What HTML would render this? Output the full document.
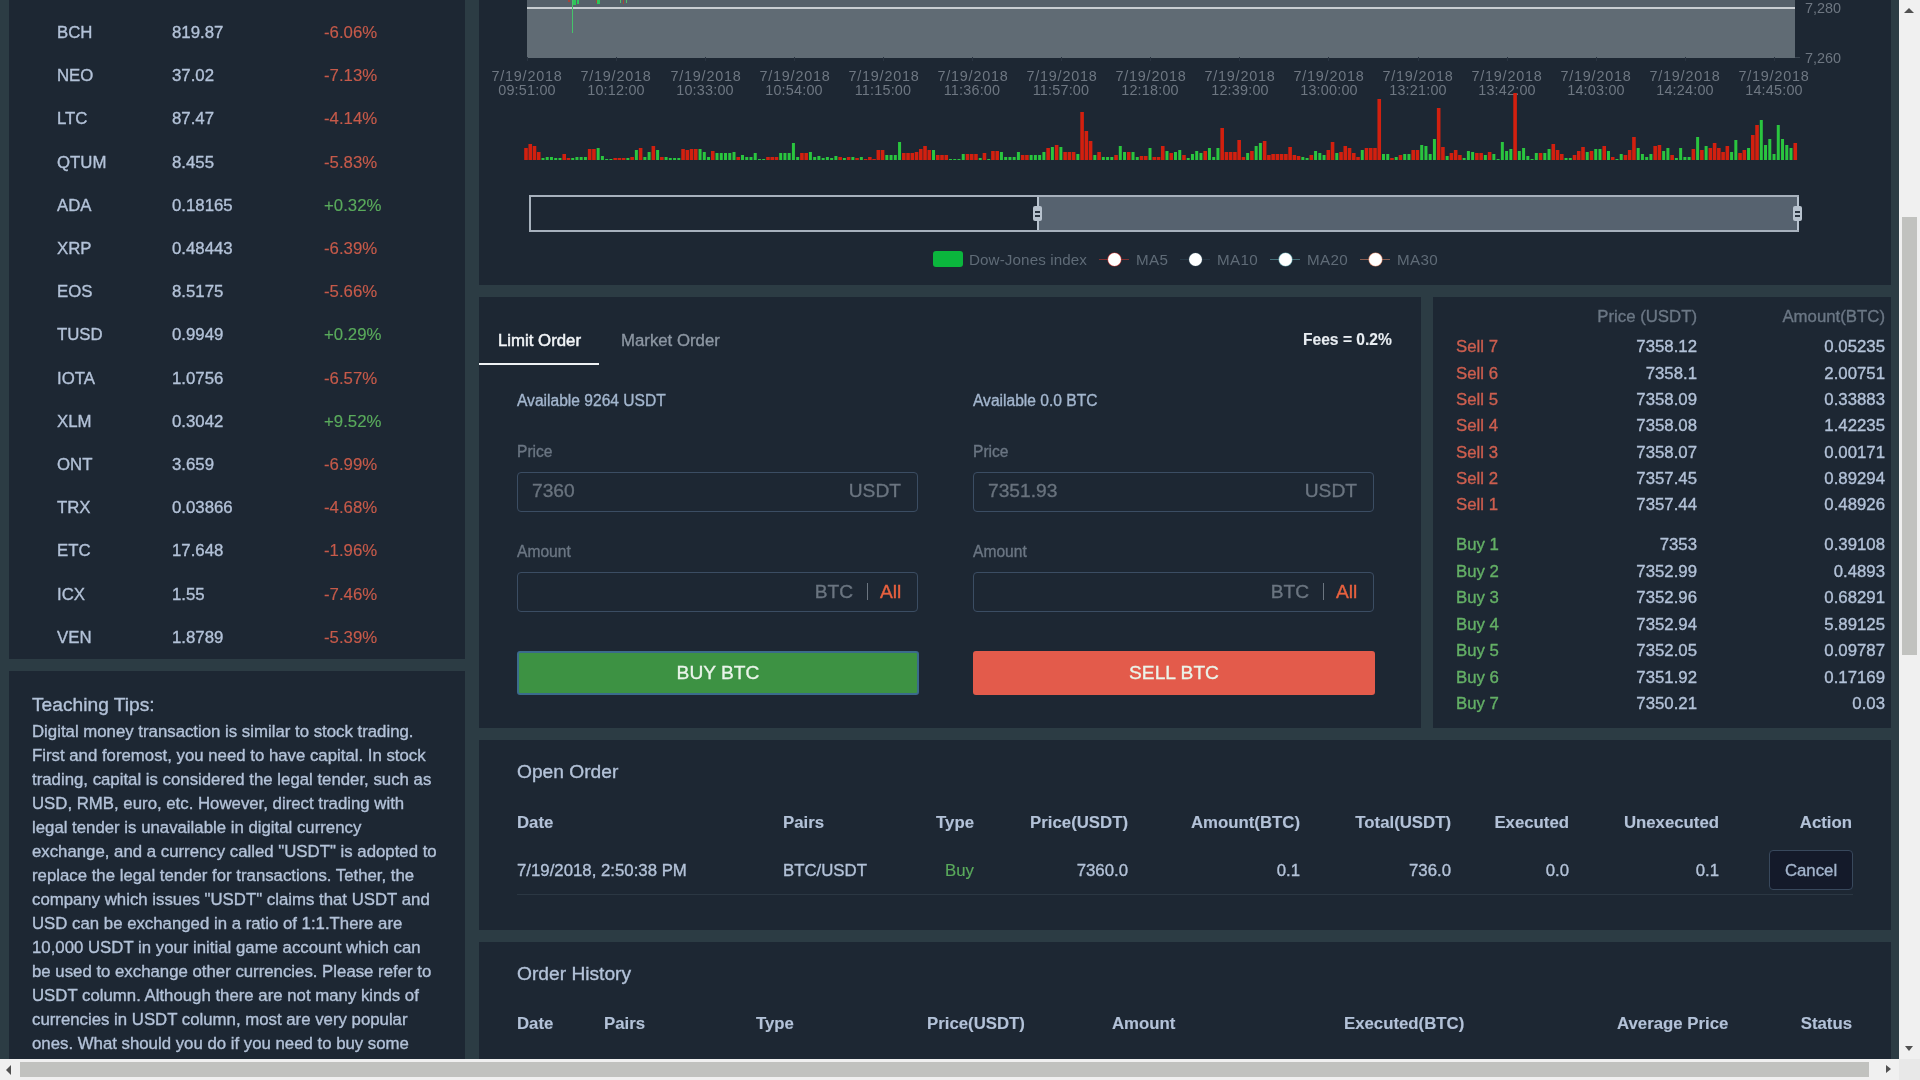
<!DOCTYPE html>
<html><head><meta charset="utf-8"><title>Trade</title>
<style>
html,body{margin:0;padding:0;width:1920px;height:1080px;overflow:hidden;background:#f0f0f0;}
#page{position:absolute;left:0;top:0;transform:translateZ(0);width:1899px;height:1059px;background:#2c3c44;overflow:hidden;font-family:"Liberation Sans",sans-serif;}
.t{position:absolute;line-height:1;white-space:nowrap;-webkit-text-stroke-width:0.35px;will-change:transform;}
.b{-webkit-text-stroke-width:0.12px;}
.r{position:absolute;}
#vs{position:absolute;left:1899px;top:0;width:21px;height:1059px;background:#f0f0f0;}
#hs{position:absolute;left:0;top:1059px;width:1899px;height:21px;background:#f0f0f0;}
#corner{position:absolute;left:1899px;top:1059px;width:21px;height:21px;background:#e8e8e8;}
</style></head><body>
<div id="page"><div class="r" style="left:9px;top:0px;width:456px;height:659px;background:#1d2733;"></div><div class="r" style="left:9px;top:671px;width:456px;height:500px;background:#1d2733;"></div><div class="r" style="left:479px;top:0px;width:1412px;height:285px;background:#1d2733;"></div><div class="r" style="left:479px;top:297px;width:942px;height:431px;background:#1d2733;"></div><div class="r" style="left:1433px;top:297px;width:458px;height:431px;background:#1d2733;"></div><div class="r" style="left:479px;top:740px;width:1412px;height:190px;background:#1d2733;"></div><div class="r" style="left:479px;top:942px;width:1412px;height:300px;background:#1d2733;"></div><div class="t" style="left:56.5px;top:25.09px;font-size:16.8px;color:#b3c2d8;">BCH</div><div class="t" style="left:171.5px;top:25.09px;font-size:16.8px;color:#b3c2d8;">819.87</div><div class="t" style="left:324px;top:25.09px;font-size:16.8px;color:#c65a4a;-webkit-text-stroke-width:0.15px;">-6.06%</div><div class="t" style="left:56.5px;top:68.29px;font-size:16.8px;color:#b3c2d8;">NEO</div><div class="t" style="left:171.5px;top:68.29px;font-size:16.8px;color:#b3c2d8;">37.02</div><div class="t" style="left:324px;top:68.29px;font-size:16.8px;color:#c65a4a;-webkit-text-stroke-width:0.15px;">-7.13%</div><div class="t" style="left:56.5px;top:111.49px;font-size:16.8px;color:#b3c2d8;">LTC</div><div class="t" style="left:171.5px;top:111.49px;font-size:16.8px;color:#b3c2d8;">87.47</div><div class="t" style="left:324px;top:111.49px;font-size:16.8px;color:#c65a4a;-webkit-text-stroke-width:0.15px;">-4.14%</div><div class="t" style="left:56.5px;top:154.69px;font-size:16.8px;color:#b3c2d8;">QTUM</div><div class="t" style="left:171.5px;top:154.69px;font-size:16.8px;color:#b3c2d8;">8.455</div><div class="t" style="left:324px;top:154.69px;font-size:16.8px;color:#c65a4a;-webkit-text-stroke-width:0.15px;">-5.83%</div><div class="t" style="left:56.5px;top:197.89px;font-size:16.8px;color:#b3c2d8;">ADA</div><div class="t" style="left:171.5px;top:197.89px;font-size:16.8px;color:#b3c2d8;">0.18165</div><div class="t" style="left:324px;top:197.89px;font-size:16.8px;color:#5aab5c;-webkit-text-stroke-width:0.15px;">+0.32%</div><div class="t" style="left:56.5px;top:241.09px;font-size:16.8px;color:#b3c2d8;">XRP</div><div class="t" style="left:171.5px;top:241.09px;font-size:16.8px;color:#b3c2d8;">0.48443</div><div class="t" style="left:324px;top:241.09px;font-size:16.8px;color:#c65a4a;-webkit-text-stroke-width:0.15px;">-6.39%</div><div class="t" style="left:56.5px;top:284.29px;font-size:16.8px;color:#b3c2d8;">EOS</div><div class="t" style="left:171.5px;top:284.29px;font-size:16.8px;color:#b3c2d8;">8.5175</div><div class="t" style="left:324px;top:284.29px;font-size:16.8px;color:#c65a4a;-webkit-text-stroke-width:0.15px;">-5.66%</div><div class="t" style="left:56.5px;top:327.49px;font-size:16.8px;color:#b3c2d8;">TUSD</div><div class="t" style="left:171.5px;top:327.49px;font-size:16.8px;color:#b3c2d8;">0.9949</div><div class="t" style="left:324px;top:327.49px;font-size:16.8px;color:#5aab5c;-webkit-text-stroke-width:0.15px;">+0.29%</div><div class="t" style="left:56.5px;top:370.69px;font-size:16.8px;color:#b3c2d8;">IOTA</div><div class="t" style="left:171.5px;top:370.69px;font-size:16.8px;color:#b3c2d8;">1.0756</div><div class="t" style="left:324px;top:370.69px;font-size:16.8px;color:#c65a4a;-webkit-text-stroke-width:0.15px;">-6.57%</div><div class="t" style="left:56.5px;top:413.89px;font-size:16.8px;color:#b3c2d8;">XLM</div><div class="t" style="left:171.5px;top:413.89px;font-size:16.8px;color:#b3c2d8;">0.3042</div><div class="t" style="left:324px;top:413.89px;font-size:16.8px;color:#5aab5c;-webkit-text-stroke-width:0.15px;">+9.52%</div><div class="t" style="left:56.5px;top:457.09px;font-size:16.8px;color:#b3c2d8;">ONT</div><div class="t" style="left:171.5px;top:457.09px;font-size:16.8px;color:#b3c2d8;">3.659</div><div class="t" style="left:324px;top:457.09px;font-size:16.8px;color:#c65a4a;-webkit-text-stroke-width:0.15px;">-6.99%</div><div class="t" style="left:56.5px;top:500.29px;font-size:16.8px;color:#b3c2d8;">TRX</div><div class="t" style="left:171.5px;top:500.29px;font-size:16.8px;color:#b3c2d8;">0.03866</div><div class="t" style="left:324px;top:500.29px;font-size:16.8px;color:#c65a4a;-webkit-text-stroke-width:0.15px;">-4.68%</div><div class="t" style="left:56.5px;top:543.49px;font-size:16.8px;color:#b3c2d8;">ETC</div><div class="t" style="left:171.5px;top:543.49px;font-size:16.8px;color:#b3c2d8;">17.648</div><div class="t" style="left:324px;top:543.49px;font-size:16.8px;color:#c65a4a;-webkit-text-stroke-width:0.15px;">-1.96%</div><div class="t" style="left:56.5px;top:586.69px;font-size:16.8px;color:#b3c2d8;">ICX</div><div class="t" style="left:171.5px;top:586.69px;font-size:16.8px;color:#b3c2d8;">1.55</div><div class="t" style="left:324px;top:586.69px;font-size:16.8px;color:#c65a4a;-webkit-text-stroke-width:0.15px;">-7.46%</div><div class="t" style="left:56.5px;top:629.89px;font-size:16.8px;color:#b3c2d8;">VEN</div><div class="t" style="left:171.5px;top:629.89px;font-size:16.8px;color:#b3c2d8;">1.8789</div><div class="t" style="left:324px;top:629.89px;font-size:16.8px;color:#c65a4a;-webkit-text-stroke-width:0.15px;">-5.39%</div><div class="t" style="left:32px;top:694.82px;font-size:19.2px;color:#b3c2d8;">Teaching Tips:</div><div class="t" style="left:32px;top:723.69px;font-size:16.8px;color:#b3c2d8;">Digital money transaction is similar to stock trading.</div><div class="t" style="left:32px;top:747.69px;font-size:16.8px;color:#b3c2d8;">First and foremost, you need to have capital. In stock</div><div class="t" style="left:32px;top:771.69px;font-size:16.8px;color:#b3c2d8;">trading, capital is considered the legal tender, such as</div><div class="t" style="left:32px;top:795.69px;font-size:16.8px;color:#b3c2d8;">USD, RMB, euro, etc. However, direct trading with</div><div class="t" style="left:32px;top:819.69px;font-size:16.8px;color:#b3c2d8;">legal tender is unavailable in digital currency</div><div class="t" style="left:32px;top:843.69px;font-size:16.8px;color:#b3c2d8;">exchange, and a currency called &quot;USDT&quot; is adopted to</div><div class="t" style="left:32px;top:867.69px;font-size:16.8px;color:#b3c2d8;">replace the legal tender for transactions. Tether, the</div><div class="t" style="left:32px;top:891.69px;font-size:16.8px;color:#b3c2d8;">company which issues &quot;USDT&quot; claims that USDT and</div><div class="t" style="left:32px;top:915.69px;font-size:16.8px;color:#b3c2d8;">USD can be exchanged in a ratio of 1:1.There are</div><div class="t" style="left:32px;top:939.69px;font-size:16.8px;color:#b3c2d8;">10,000 USDT in your initial game account which can</div><div class="t" style="left:32px;top:963.69px;font-size:16.8px;color:#b3c2d8;">be used to exchange other currencies. Please refer to</div><div class="t" style="left:32px;top:987.69px;font-size:16.8px;color:#b3c2d8;">USDT column. Although there are not many kinds of</div><div class="t" style="left:32px;top:1011.69px;font-size:16.8px;color:#b3c2d8;">currencies in USDT column, most are very popular</div><div class="t" style="left:32px;top:1035.69px;font-size:16.8px;color:#b3c2d8;">ones. What should you do if you need to buy some</div><div class="r" style="left:527px;top:0px;width:1268px;height:58px;background:#606b74;"></div><div class="r" style="left:527px;top:0px;width:1268px;height:7px;background:#56616b;"></div><div class="r" style="left:527px;top:7px;width:1268px;height:2px;background:#c9ced3;"></div><div class="r" style="left:527px;top:57px;width:1px;height:4px;background:#2a3441;"></div><div class="t" style="left:527.4px;top:68.86px;font-size:14.4px;color:#6e7782;transform:translateX(-50%);letter-spacing:0.8px;-webkit-text-stroke-width:0;">7/19/2018</div><div class="t" style="left:527.1px;top:83.26px;font-size:14.4px;color:#6e7782;transform:translateX(-50%);letter-spacing:0.2px;-webkit-text-stroke-width:0;">09:51:00</div><div class="r" style="left:616px;top:57px;width:1px;height:4px;background:#2a3441;"></div><div class="t" style="left:616.4499999999999px;top:68.86px;font-size:14.4px;color:#6e7782;transform:translateX(-50%);letter-spacing:0.8px;-webkit-text-stroke-width:0;">7/19/2018</div><div class="t" style="left:616.15px;top:83.26px;font-size:14.4px;color:#6e7782;transform:translateX(-50%);letter-spacing:0.2px;-webkit-text-stroke-width:0;">10:12:00</div><div class="r" style="left:705px;top:57px;width:1px;height:4px;background:#2a3441;"></div><div class="t" style="left:705.5px;top:68.86px;font-size:14.4px;color:#6e7782;transform:translateX(-50%);letter-spacing:0.8px;-webkit-text-stroke-width:0;">7/19/2018</div><div class="t" style="left:705.2px;top:83.26px;font-size:14.4px;color:#6e7782;transform:translateX(-50%);letter-spacing:0.2px;-webkit-text-stroke-width:0;">10:33:00</div><div class="r" style="left:794px;top:57px;width:1px;height:4px;background:#2a3441;"></div><div class="t" style="left:794.55px;top:68.86px;font-size:14.4px;color:#6e7782;transform:translateX(-50%);letter-spacing:0.8px;-webkit-text-stroke-width:0;">7/19/2018</div><div class="t" style="left:794.25px;top:83.26px;font-size:14.4px;color:#6e7782;transform:translateX(-50%);letter-spacing:0.2px;-webkit-text-stroke-width:0;">10:54:00</div><div class="r" style="left:883px;top:57px;width:1px;height:4px;background:#2a3441;"></div><div class="t" style="left:883.6px;top:68.86px;font-size:14.4px;color:#6e7782;transform:translateX(-50%);letter-spacing:0.8px;-webkit-text-stroke-width:0;">7/19/2018</div><div class="t" style="left:883.3000000000001px;top:83.26px;font-size:14.4px;color:#6e7782;transform:translateX(-50%);letter-spacing:0.2px;-webkit-text-stroke-width:0;">11:15:00</div><div class="r" style="left:972px;top:57px;width:1px;height:4px;background:#2a3441;"></div><div class="t" style="left:972.65px;top:68.86px;font-size:14.4px;color:#6e7782;transform:translateX(-50%);letter-spacing:0.8px;-webkit-text-stroke-width:0;">7/19/2018</div><div class="t" style="left:972.35px;top:83.26px;font-size:14.4px;color:#6e7782;transform:translateX(-50%);letter-spacing:0.2px;-webkit-text-stroke-width:0;">11:36:00</div><div class="r" style="left:1061px;top:57px;width:1px;height:4px;background:#2a3441;"></div><div class="t" style="left:1061.7px;top:68.86px;font-size:14.4px;color:#6e7782;transform:translateX(-50%);letter-spacing:0.8px;-webkit-text-stroke-width:0;">7/19/2018</div><div class="t" style="left:1061.3999999999999px;top:83.26px;font-size:14.4px;color:#6e7782;transform:translateX(-50%);letter-spacing:0.2px;-webkit-text-stroke-width:0;">11:57:00</div><div class="r" style="left:1150px;top:57px;width:1px;height:4px;background:#2a3441;"></div><div class="t" style="left:1150.75px;top:68.86px;font-size:14.4px;color:#6e7782;transform:translateX(-50%);letter-spacing:0.8px;-webkit-text-stroke-width:0;">7/19/2018</div><div class="t" style="left:1150.4499999999998px;top:83.26px;font-size:14.4px;color:#6e7782;transform:translateX(-50%);letter-spacing:0.2px;-webkit-text-stroke-width:0;">12:18:00</div><div class="r" style="left:1239px;top:57px;width:1px;height:4px;background:#2a3441;"></div><div class="t" style="left:1239.8000000000002px;top:68.86px;font-size:14.4px;color:#6e7782;transform:translateX(-50%);letter-spacing:0.8px;-webkit-text-stroke-width:0;">7/19/2018</div><div class="t" style="left:1239.5px;top:83.26px;font-size:14.4px;color:#6e7782;transform:translateX(-50%);letter-spacing:0.2px;-webkit-text-stroke-width:0;">12:39:00</div><div class="r" style="left:1328px;top:57px;width:1px;height:4px;background:#2a3441;"></div><div class="t" style="left:1328.85px;top:68.86px;font-size:14.4px;color:#6e7782;transform:translateX(-50%);letter-spacing:0.8px;-webkit-text-stroke-width:0;">7/19/2018</div><div class="t" style="left:1328.5499999999997px;top:83.26px;font-size:14.4px;color:#6e7782;transform:translateX(-50%);letter-spacing:0.2px;-webkit-text-stroke-width:0;">13:00:00</div><div class="r" style="left:1418px;top:57px;width:1px;height:4px;background:#2a3441;"></div><div class="t" style="left:1417.9px;top:68.86px;font-size:14.4px;color:#6e7782;transform:translateX(-50%);letter-spacing:0.8px;-webkit-text-stroke-width:0;">7/19/2018</div><div class="t" style="left:1417.6px;top:83.26px;font-size:14.4px;color:#6e7782;transform:translateX(-50%);letter-spacing:0.2px;-webkit-text-stroke-width:0;">13:21:00</div><div class="r" style="left:1507px;top:57px;width:1px;height:4px;background:#2a3441;"></div><div class="t" style="left:1506.95px;top:68.86px;font-size:14.4px;color:#6e7782;transform:translateX(-50%);letter-spacing:0.8px;-webkit-text-stroke-width:0;">7/19/2018</div><div class="t" style="left:1506.6499999999999px;top:83.26px;font-size:14.4px;color:#6e7782;transform:translateX(-50%);letter-spacing:0.2px;-webkit-text-stroke-width:0;">13:42:00</div><div class="r" style="left:1596px;top:57px;width:1px;height:4px;background:#2a3441;"></div><div class="t" style="left:1596.0px;top:68.86px;font-size:14.4px;color:#6e7782;transform:translateX(-50%);letter-spacing:0.8px;-webkit-text-stroke-width:0;">7/19/2018</div><div class="t" style="left:1595.6999999999998px;top:83.26px;font-size:14.4px;color:#6e7782;transform:translateX(-50%);letter-spacing:0.2px;-webkit-text-stroke-width:0;">14:03:00</div><div class="r" style="left:1685px;top:57px;width:1px;height:4px;background:#2a3441;"></div><div class="t" style="left:1685.05px;top:68.86px;font-size:14.4px;color:#6e7782;transform:translateX(-50%);letter-spacing:0.8px;-webkit-text-stroke-width:0;">7/19/2018</div><div class="t" style="left:1684.7499999999998px;top:83.26px;font-size:14.4px;color:#6e7782;transform:translateX(-50%);letter-spacing:0.2px;-webkit-text-stroke-width:0;">14:24:00</div><div class="r" style="left:1774px;top:57px;width:1px;height:4px;background:#2a3441;"></div><div class="t" style="left:1774.1000000000001px;top:68.86px;font-size:14.4px;color:#6e7782;transform:translateX(-50%);letter-spacing:0.8px;-webkit-text-stroke-width:0;">7/19/2018</div><div class="t" style="left:1773.8px;top:83.26px;font-size:14.4px;color:#6e7782;transform:translateX(-50%);letter-spacing:0.2px;-webkit-text-stroke-width:0;">14:45:00</div><div class="t" style="left:1805px;top:0.86px;font-size:14.4px;color:#6e7782;-webkit-text-stroke-width:0;">7,280</div><div class="t" style="left:1805px;top:51.16px;font-size:14.4px;color:#6e7782;-webkit-text-stroke-width:0;">7,260</div><div class="r" style="left:1795px;top:57px;width:5px;height:1px;background:#3a4550;"></div><div class="r" style="left:572px;top:0px;width:1px;height:33px;background:#45c46a;"></div><div class="r" style="left:573px;top:0px;width:3px;height:5px;background:#2ec55a;"></div><div class="r" style="left:577px;top:0px;width:2px;height:4px;background:#2ec55a;"></div><div class="r" style="left:568px;top:0px;width:2px;height:2px;background:#a5443a;"></div><div class="r" style="left:596px;top:0px;width:2px;height:3px;background:#a5443a;"></div><div class="r" style="left:597px;top:0px;width:3px;height:4px;background:#2ec55a;"></div><div class="r" style="left:620px;top:0px;width:1px;height:3px;background:#4fbf6a;"></div><div class="r" style="left:623px;top:0px;width:1px;height:4px;background:#a5443a;"></div><div class="r" style="left:626px;top:0px;width:1px;height:3px;background:#4fbf6a;"></div><svg class="r" style="left:520px;top:0px" width="1290" height="170" viewBox="0 0 1290 170"><rect x="4.20" y="148" width="3.6" height="12" fill="#d2200f"/><rect x="8.45" y="144" width="3.6" height="16" fill="#d2200f"/><rect x="12.69" y="146" width="3.6" height="14" fill="#d2200f"/><rect x="16.94" y="152" width="3.6" height="8" fill="#d2200f"/><rect x="21.48" y="158" width="3.0" height="2" fill="#2ac53f"/><rect x="25.73" y="157" width="3.0" height="3" fill="#2ac53f"/><rect x="29.97" y="157" width="3.0" height="3" fill="#2ac53f"/><rect x="34.22" y="158" width="3.0" height="2" fill="#2ac53f"/><rect x="38.46" y="158" width="3.0" height="2" fill="#2ac53f"/><rect x="42.41" y="154" width="3.6" height="6" fill="#d2200f"/><rect x="46.65" y="158" width="3.6" height="2" fill="#d2200f"/><rect x="51.20" y="158" width="3.0" height="2" fill="#2ac53f"/><rect x="55.44" y="157" width="3.0" height="3" fill="#2ac53f"/><rect x="59.68" y="157" width="3.0" height="3" fill="#2ac53f"/><rect x="63.93" y="157" width="3.0" height="3" fill="#2ac53f"/><rect x="67.88" y="149" width="3.6" height="11" fill="#d2200f"/><rect x="72.12" y="149" width="3.6" height="11" fill="#d2200f"/><rect x="76.66" y="148" width="3.0" height="12" fill="#2ac53f"/><rect x="80.91" y="156" width="3.0" height="4" fill="#2ac53f"/><rect x="85.15" y="159" width="3.0" height="1" fill="#2ac53f"/><rect x="89.40" y="159" width="3.0" height="1" fill="#2ac53f"/><rect x="93.35" y="158" width="3.6" height="2" fill="#d2200f"/><rect x="97.59" y="158" width="3.6" height="2" fill="#d2200f"/><rect x="101.84" y="158" width="3.6" height="2" fill="#d2200f"/><rect x="106.38" y="158" width="3.0" height="2" fill="#2ac53f"/><rect x="110.33" y="157" width="3.6" height="3" fill="#d2200f"/><rect x="114.87" y="150" width="3.0" height="10" fill="#2ac53f"/><rect x="118.82" y="148" width="3.6" height="12" fill="#d2200f"/><rect x="123.36" y="157" width="3.0" height="3" fill="#2ac53f"/><rect x="127.61" y="152" width="3.0" height="8" fill="#2ac53f"/><rect x="131.55" y="146" width="3.6" height="14" fill="#d2200f"/><rect x="136.10" y="150" width="3.0" height="10" fill="#2ac53f"/><rect x="140.04" y="157" width="3.6" height="3" fill="#d2200f"/><rect x="144.59" y="157" width="3.0" height="3" fill="#2ac53f"/><rect x="148.83" y="158" width="3.0" height="2" fill="#2ac53f"/><rect x="153.08" y="158" width="3.0" height="2" fill="#2ac53f"/><rect x="157.32" y="158" width="3.0" height="2" fill="#2ac53f"/><rect x="161.27" y="149" width="3.6" height="11" fill="#d2200f"/><rect x="165.51" y="150" width="3.6" height="10" fill="#d2200f"/><rect x="169.76" y="149" width="3.6" height="11" fill="#d2200f"/><rect x="174.00" y="149" width="3.6" height="11" fill="#d2200f"/><rect x="178.55" y="149" width="3.0" height="11" fill="#2ac53f"/><rect x="182.79" y="152" width="3.0" height="8" fill="#2ac53f"/><rect x="187.03" y="157" width="3.0" height="3" fill="#2ac53f"/><rect x="190.98" y="151" width="3.6" height="9" fill="#d2200f"/><rect x="195.52" y="153" width="3.0" height="7" fill="#2ac53f"/><rect x="199.77" y="153" width="3.0" height="7" fill="#2ac53f"/><rect x="204.01" y="153" width="3.0" height="7" fill="#2ac53f"/><rect x="208.26" y="153" width="3.0" height="7" fill="#2ac53f"/><rect x="212.50" y="152" width="3.0" height="8" fill="#2ac53f"/><rect x="216.45" y="157" width="3.6" height="3" fill="#d2200f"/><rect x="221.00" y="155" width="3.0" height="5" fill="#2ac53f"/><rect x="225.24" y="157" width="3.0" height="3" fill="#2ac53f"/><rect x="229.49" y="157" width="3.0" height="3" fill="#2ac53f"/><rect x="233.73" y="153" width="3.0" height="7" fill="#2ac53f"/><rect x="237.98" y="159" width="3.0" height="1" fill="#2ac53f"/><rect x="242.22" y="159" width="3.0" height="1" fill="#2ac53f"/><rect x="246.17" y="157" width="3.6" height="3" fill="#d2200f"/><rect x="250.41" y="157" width="3.6" height="3" fill="#d2200f"/><rect x="254.66" y="157" width="3.6" height="3" fill="#d2200f"/><rect x="259.20" y="153" width="3.0" height="7" fill="#2ac53f"/><rect x="263.44" y="153" width="3.0" height="7" fill="#2ac53f"/><rect x="267.69" y="153" width="3.0" height="7" fill="#2ac53f"/><rect x="271.93" y="143" width="3.0" height="17" fill="#2ac53f"/><rect x="276.18" y="157" width="3.0" height="3" fill="#2ac53f"/><rect x="280.12" y="153" width="3.6" height="7" fill="#d2200f"/><rect x="284.37" y="153" width="3.6" height="7" fill="#d2200f"/><rect x="288.91" y="152" width="3.0" height="8" fill="#2ac53f"/><rect x="293.16" y="157" width="3.0" height="3" fill="#2ac53f"/><rect x="297.40" y="156" width="3.0" height="4" fill="#2ac53f"/><rect x="301.65" y="158" width="3.0" height="2" fill="#2ac53f"/><rect x="305.89" y="157" width="3.0" height="3" fill="#2ac53f"/><rect x="310.14" y="158" width="3.0" height="2" fill="#2ac53f"/><rect x="314.38" y="156" width="3.0" height="4" fill="#2ac53f"/><rect x="318.33" y="157" width="3.6" height="3" fill="#d2200f"/><rect x="322.88" y="158" width="3.0" height="2" fill="#2ac53f"/><rect x="326.82" y="157" width="3.6" height="3" fill="#d2200f"/><rect x="331.37" y="157" width="3.0" height="3" fill="#2ac53f"/><rect x="335.31" y="158" width="3.6" height="2" fill="#d2200f"/><rect x="339.86" y="157" width="3.0" height="3" fill="#2ac53f"/><rect x="343.80" y="159" width="3.6" height="1" fill="#d2200f"/><rect x="348.05" y="157" width="3.6" height="3" fill="#d2200f"/><rect x="352.29" y="159" width="3.6" height="1" fill="#d2200f"/><rect x="356.54" y="150" width="3.6" height="10" fill="#d2200f"/><rect x="360.78" y="150" width="3.6" height="10" fill="#d2200f"/><rect x="365.33" y="155" width="3.0" height="5" fill="#2ac53f"/><rect x="369.57" y="155" width="3.0" height="5" fill="#2ac53f"/><rect x="373.82" y="155" width="3.0" height="5" fill="#2ac53f"/><rect x="378.06" y="142" width="3.0" height="18" fill="#2ac53f"/><rect x="382.01" y="153" width="3.6" height="7" fill="#d2200f"/><rect x="386.25" y="153" width="3.6" height="7" fill="#d2200f"/><rect x="390.50" y="153" width="3.6" height="7" fill="#d2200f"/><rect x="394.74" y="152" width="3.6" height="8" fill="#d2200f"/><rect x="398.99" y="149" width="3.6" height="11" fill="#d2200f"/><rect x="403.23" y="146" width="3.6" height="14" fill="#d2200f"/><rect x="407.48" y="150" width="3.6" height="10" fill="#d2200f"/><rect x="412.02" y="150" width="3.0" height="10" fill="#2ac53f"/><rect x="415.97" y="155" width="3.6" height="5" fill="#d2200f"/><rect x="420.21" y="155" width="3.6" height="5" fill="#d2200f"/><rect x="424.46" y="155" width="3.6" height="5" fill="#d2200f"/><rect x="429.00" y="159" width="3.0" height="1" fill="#2ac53f"/><rect x="433.25" y="159" width="3.0" height="1" fill="#2ac53f"/><rect x="437.49" y="159" width="3.0" height="1" fill="#2ac53f"/><rect x="441.74" y="154" width="3.0" height="6" fill="#2ac53f"/><rect x="445.68" y="154" width="3.6" height="6" fill="#d2200f"/><rect x="449.93" y="154" width="3.6" height="6" fill="#d2200f"/><rect x="454.17" y="154" width="3.6" height="6" fill="#d2200f"/><rect x="458.72" y="158" width="3.0" height="2" fill="#2ac53f"/><rect x="462.66" y="153" width="3.6" height="7" fill="#d2200f"/><rect x="467.20" y="159" width="3.0" height="1" fill="#2ac53f"/><rect x="471.15" y="151" width="3.6" height="9" fill="#d2200f"/><rect x="475.39" y="151" width="3.6" height="9" fill="#d2200f"/><rect x="479.94" y="152" width="3.0" height="8" fill="#2ac53f"/><rect x="484.18" y="157" width="3.0" height="3" fill="#2ac53f"/><rect x="488.43" y="157" width="3.0" height="3" fill="#2ac53f"/><rect x="492.67" y="157" width="3.0" height="3" fill="#2ac53f"/><rect x="496.92" y="152" width="3.0" height="8" fill="#2ac53f"/><rect x="500.87" y="155" width="3.6" height="5" fill="#d2200f"/><rect x="505.11" y="155" width="3.6" height="5" fill="#d2200f"/><rect x="509.65" y="155" width="3.0" height="5" fill="#2ac53f"/><rect x="513.90" y="155" width="3.0" height="5" fill="#2ac53f"/><rect x="518.14" y="155" width="3.0" height="5" fill="#2ac53f"/><rect x="522.39" y="152" width="3.0" height="8" fill="#2ac53f"/><rect x="526.34" y="148" width="3.6" height="12" fill="#d2200f"/><rect x="530.88" y="147" width="3.0" height="13" fill="#2ac53f"/><rect x="534.83" y="145" width="3.6" height="15" fill="#d2200f"/><rect x="539.37" y="147" width="3.0" height="13" fill="#2ac53f"/><rect x="543.32" y="152" width="3.6" height="8" fill="#d2200f"/><rect x="547.56" y="152" width="3.6" height="8" fill="#d2200f"/><rect x="551.81" y="152" width="3.6" height="8" fill="#d2200f"/><rect x="556.35" y="154" width="3.0" height="6" fill="#2ac53f"/><rect x="560.30" y="112" width="3.6" height="48" fill="#d2200f"/><rect x="564.54" y="131" width="3.6" height="29" fill="#d2200f"/><rect x="568.79" y="141" width="3.6" height="19" fill="#d2200f"/><rect x="573.33" y="155" width="3.0" height="5" fill="#2ac53f"/><rect x="577.28" y="152" width="3.6" height="8" fill="#d2200f"/><rect x="581.82" y="157" width="3.0" height="3" fill="#2ac53f"/><rect x="586.07" y="157" width="3.0" height="3" fill="#2ac53f"/><rect x="590.31" y="157" width="3.0" height="3" fill="#2ac53f"/><rect x="594.26" y="155" width="3.6" height="5" fill="#d2200f"/><rect x="598.80" y="146" width="3.0" height="14" fill="#2ac53f"/><rect x="603.05" y="152" width="3.0" height="8" fill="#2ac53f"/><rect x="606.99" y="152" width="3.6" height="8" fill="#d2200f"/><rect x="611.53" y="152" width="3.0" height="8" fill="#2ac53f"/><rect x="615.78" y="157" width="3.0" height="3" fill="#2ac53f"/><rect x="619.73" y="156" width="3.6" height="4" fill="#d2200f"/><rect x="623.97" y="156" width="3.6" height="4" fill="#d2200f"/><rect x="628.51" y="148" width="3.0" height="12" fill="#2ac53f"/><rect x="632.46" y="157" width="3.6" height="3" fill="#d2200f"/><rect x="636.71" y="157" width="3.6" height="3" fill="#d2200f"/><rect x="640.95" y="146" width="3.6" height="14" fill="#d2200f"/><rect x="645.49" y="151" width="3.0" height="9" fill="#2ac53f"/><rect x="649.44" y="153" width="3.6" height="7" fill="#d2200f"/><rect x="653.99" y="152" width="3.0" height="8" fill="#2ac53f"/><rect x="658.23" y="150" width="3.0" height="10" fill="#2ac53f"/><rect x="662.17" y="155" width="3.6" height="5" fill="#d2200f"/><rect x="666.72" y="158" width="3.0" height="2" fill="#2ac53f"/><rect x="670.97" y="154" width="3.0" height="6" fill="#2ac53f"/><rect x="675.21" y="151" width="3.0" height="9" fill="#2ac53f"/><rect x="679.45" y="153" width="3.0" height="7" fill="#2ac53f"/><rect x="683.40" y="151" width="3.6" height="9" fill="#d2200f"/><rect x="687.95" y="148" width="3.0" height="12" fill="#2ac53f"/><rect x="692.19" y="157" width="3.0" height="3" fill="#2ac53f"/><rect x="696.43" y="148" width="3.0" height="12" fill="#2ac53f"/><rect x="700.38" y="128" width="3.6" height="32" fill="#d2200f"/><rect x="704.63" y="152" width="3.6" height="8" fill="#d2200f"/><rect x="708.87" y="152" width="3.6" height="8" fill="#d2200f"/><rect x="713.12" y="152" width="3.6" height="8" fill="#d2200f"/><rect x="717.36" y="140" width="3.6" height="20" fill="#d2200f"/><rect x="721.61" y="157" width="3.6" height="3" fill="#d2200f"/><rect x="726.15" y="153" width="3.0" height="7" fill="#2ac53f"/><rect x="730.10" y="151" width="3.6" height="9" fill="#d2200f"/><rect x="734.64" y="146" width="3.0" height="14" fill="#2ac53f"/><rect x="738.88" y="143" width="3.0" height="17" fill="#2ac53f"/><rect x="742.83" y="141" width="3.6" height="19" fill="#d2200f"/><rect x="747.08" y="155" width="3.6" height="5" fill="#d2200f"/><rect x="751.32" y="154" width="3.6" height="6" fill="#d2200f"/><rect x="755.57" y="154" width="3.6" height="6" fill="#d2200f"/><rect x="759.81" y="154" width="3.6" height="6" fill="#d2200f"/><rect x="764.06" y="154" width="3.6" height="6" fill="#d2200f"/><rect x="768.30" y="147" width="3.6" height="13" fill="#d2200f"/><rect x="772.55" y="155" width="3.6" height="5" fill="#d2200f"/><rect x="776.79" y="156" width="3.6" height="4" fill="#d2200f"/><rect x="781.34" y="157" width="3.0" height="3" fill="#2ac53f"/><rect x="785.58" y="158" width="3.0" height="2" fill="#2ac53f"/><rect x="789.53" y="155" width="3.6" height="5" fill="#d2200f"/><rect x="794.07" y="151" width="3.0" height="9" fill="#2ac53f"/><rect x="798.32" y="153" width="3.0" height="7" fill="#2ac53f"/><rect x="802.56" y="155" width="3.0" height="5" fill="#2ac53f"/><rect x="806.51" y="150" width="3.6" height="10" fill="#d2200f"/><rect x="810.75" y="142" width="3.6" height="18" fill="#d2200f"/><rect x="815.30" y="153" width="3.0" height="7" fill="#2ac53f"/><rect x="819.24" y="152" width="3.6" height="8" fill="#d2200f"/><rect x="823.48" y="146" width="3.6" height="14" fill="#d2200f"/><rect x="827.73" y="148" width="3.6" height="12" fill="#d2200f"/><rect x="831.98" y="153" width="3.6" height="7" fill="#d2200f"/><rect x="836.22" y="157" width="3.6" height="3" fill="#d2200f"/><rect x="840.76" y="150" width="3.0" height="10" fill="#2ac53f"/><rect x="844.71" y="148" width="3.6" height="12" fill="#d2200f"/><rect x="848.96" y="148" width="3.6" height="12" fill="#d2200f"/><rect x="853.20" y="148" width="3.6" height="12" fill="#d2200f"/><rect x="857.44" y="99" width="3.6" height="61" fill="#d2200f"/><rect x="861.99" y="154" width="3.0" height="6" fill="#2ac53f"/><rect x="866.24" y="154" width="3.0" height="6" fill="#2ac53f"/><rect x="870.18" y="158" width="3.6" height="2" fill="#d2200f"/><rect x="874.72" y="157" width="3.0" height="3" fill="#2ac53f"/><rect x="878.67" y="155" width="3.6" height="5" fill="#d2200f"/><rect x="883.22" y="154" width="3.0" height="6" fill="#2ac53f"/><rect x="887.46" y="154" width="3.0" height="6" fill="#2ac53f"/><rect x="891.40" y="150" width="3.6" height="10" fill="#d2200f"/><rect x="895.65" y="150" width="3.6" height="10" fill="#d2200f"/><rect x="900.20" y="145" width="3.0" height="15" fill="#2ac53f"/><rect x="904.44" y="146" width="3.0" height="14" fill="#2ac53f"/><rect x="908.68" y="154" width="3.0" height="6" fill="#2ac53f"/><rect x="912.93" y="139" width="3.0" height="21" fill="#2ac53f"/><rect x="916.88" y="108" width="3.6" height="52" fill="#d2200f"/><rect x="921.12" y="147" width="3.6" height="13" fill="#d2200f"/><rect x="925.66" y="156" width="3.0" height="4" fill="#2ac53f"/><rect x="929.61" y="153" width="3.6" height="7" fill="#d2200f"/><rect x="933.86" y="150" width="3.6" height="10" fill="#d2200f"/><rect x="938.10" y="155" width="3.6" height="5" fill="#d2200f"/><rect x="942.64" y="158" width="3.0" height="2" fill="#2ac53f"/><rect x="946.89" y="151" width="3.0" height="9" fill="#2ac53f"/><rect x="951.13" y="152" width="3.0" height="8" fill="#2ac53f"/><rect x="955.08" y="153" width="3.6" height="7" fill="#d2200f"/><rect x="959.33" y="153" width="3.6" height="7" fill="#d2200f"/><rect x="963.87" y="155" width="3.0" height="5" fill="#2ac53f"/><rect x="967.82" y="152" width="3.6" height="8" fill="#d2200f"/><rect x="972.36" y="154" width="3.0" height="6" fill="#2ac53f"/><rect x="976.61" y="159" width="3.0" height="1" fill="#2ac53f"/><rect x="980.85" y="142" width="3.0" height="18" fill="#2ac53f"/><rect x="985.10" y="151" width="3.0" height="9" fill="#2ac53f"/><rect x="989.34" y="149" width="3.0" height="11" fill="#2ac53f"/><rect x="993.29" y="93" width="3.6" height="67" fill="#d2200f"/><rect x="997.83" y="151" width="3.0" height="9" fill="#2ac53f"/><rect x="1002.08" y="148" width="3.0" height="12" fill="#2ac53f"/><rect x="1006.32" y="156" width="3.0" height="4" fill="#2ac53f"/><rect x="1010.57" y="159" width="3.0" height="1" fill="#2ac53f"/><rect x="1014.81" y="153" width="3.0" height="7" fill="#2ac53f"/><rect x="1018.76" y="153" width="3.6" height="7" fill="#d2200f"/><rect x="1023.30" y="153" width="3.0" height="7" fill="#2ac53f"/><rect x="1027.55" y="149" width="3.0" height="11" fill="#2ac53f"/><rect x="1031.49" y="144" width="3.6" height="16" fill="#d2200f"/><rect x="1035.74" y="150" width="3.6" height="10" fill="#d2200f"/><rect x="1039.98" y="154" width="3.6" height="6" fill="#d2200f"/><rect x="1044.53" y="158" width="3.0" height="2" fill="#2ac53f"/><rect x="1048.77" y="158" width="3.0" height="2" fill="#2ac53f"/><rect x="1052.72" y="155" width="3.6" height="5" fill="#d2200f"/><rect x="1056.96" y="151" width="3.6" height="9" fill="#d2200f"/><rect x="1061.21" y="147" width="3.6" height="13" fill="#d2200f"/><rect x="1065.75" y="152" width="3.0" height="8" fill="#2ac53f"/><rect x="1069.70" y="151" width="3.6" height="9" fill="#d2200f"/><rect x="1074.24" y="149" width="3.0" height="11" fill="#2ac53f"/><rect x="1078.49" y="149" width="3.0" height="11" fill="#2ac53f"/><rect x="1082.43" y="146" width="3.6" height="14" fill="#d2200f"/><rect x="1086.98" y="151" width="3.0" height="9" fill="#2ac53f"/><rect x="1090.92" y="157" width="3.6" height="3" fill="#d2200f"/><rect x="1095.46" y="159" width="3.0" height="1" fill="#2ac53f"/><rect x="1099.71" y="154" width="3.0" height="6" fill="#2ac53f"/><rect x="1103.65" y="155" width="3.6" height="5" fill="#d2200f"/><rect x="1107.90" y="150" width="3.6" height="10" fill="#d2200f"/><rect x="1112.14" y="137" width="3.6" height="23" fill="#d2200f"/><rect x="1116.69" y="148" width="3.0" height="12" fill="#2ac53f"/><rect x="1120.93" y="154" width="3.0" height="6" fill="#2ac53f"/><rect x="1125.18" y="157" width="3.0" height="3" fill="#2ac53f"/><rect x="1129.42" y="154" width="3.0" height="6" fill="#2ac53f"/><rect x="1133.37" y="146" width="3.6" height="14" fill="#d2200f"/><rect x="1137.62" y="145" width="3.6" height="15" fill="#d2200f"/><rect x="1142.16" y="151" width="3.0" height="9" fill="#2ac53f"/><rect x="1146.40" y="148" width="3.0" height="12" fill="#2ac53f"/><rect x="1150.35" y="155" width="3.6" height="5" fill="#d2200f"/><rect x="1154.89" y="158" width="3.0" height="2" fill="#2ac53f"/><rect x="1159.14" y="148" width="3.0" height="12" fill="#2ac53f"/><rect x="1163.38" y="157" width="3.0" height="3" fill="#2ac53f"/><rect x="1167.63" y="157" width="3.0" height="3" fill="#2ac53f"/><rect x="1171.58" y="149" width="3.6" height="11" fill="#d2200f"/><rect x="1176.12" y="137" width="3.0" height="23" fill="#2ac53f"/><rect x="1180.07" y="150" width="3.6" height="10" fill="#d2200f"/><rect x="1184.61" y="146" width="3.0" height="14" fill="#2ac53f"/><rect x="1188.56" y="148" width="3.6" height="12" fill="#d2200f"/><rect x="1192.80" y="143" width="3.6" height="17" fill="#d2200f"/><rect x="1197.05" y="148" width="3.6" height="12" fill="#d2200f"/><rect x="1201.29" y="152" width="3.6" height="8" fill="#d2200f"/><rect x="1205.54" y="146" width="3.6" height="14" fill="#d2200f"/><rect x="1210.08" y="152" width="3.0" height="8" fill="#2ac53f"/><rect x="1214.33" y="140" width="3.0" height="20" fill="#2ac53f"/><rect x="1218.27" y="153" width="3.6" height="7" fill="#d2200f"/><rect x="1222.52" y="150" width="3.6" height="10" fill="#d2200f"/><rect x="1227.06" y="148" width="3.0" height="12" fill="#2ac53f"/><rect x="1231.01" y="135" width="3.6" height="25" fill="#d2200f"/><rect x="1235.25" y="125" width="3.6" height="35" fill="#d2200f"/><rect x="1239.80" y="120" width="3.0" height="40" fill="#2ac53f"/><rect x="1244.04" y="145" width="3.0" height="15" fill="#2ac53f"/><rect x="1248.29" y="139" width="3.0" height="21" fill="#2ac53f"/><rect x="1252.53" y="154" width="3.0" height="6" fill="#2ac53f"/><rect x="1256.78" y="125" width="3.0" height="35" fill="#2ac53f"/><rect x="1261.02" y="139" width="3.0" height="21" fill="#2ac53f"/><rect x="1265.27" y="145" width="3.0" height="15" fill="#2ac53f"/><rect x="1269.51" y="148" width="3.0" height="12" fill="#2ac53f"/><rect x="1273.46" y="143" width="3.6" height="17" fill="#d2200f"/></svg><div class="r" style="left:529px;top:195px;width:1270px;height:37px;background:transparent;border:2px solid #a7b1bd;box-sizing:border-box;"></div><div class="r" style="left:1038px;top:197px;width:759px;height:33px;background:#56626f;"></div><div class="r" style="left:1037px;top:197px;width:1.5px;height:33px;background:#b7c2ce;"></div><div class="r" style="left:1033px;top:206px;width:9px;height:15px;background:#b7c2ce;border-radius:2px;"></div><div class="r" style="left:1035px;top:211px;width:5px;height:2px;background:#2a3440;"></div><div class="r" style="left:1035px;top:215px;width:5px;height:2px;background:#2a3440;"></div><div class="r" style="left:1797px;top:197px;width:2px;height:33px;background:#b7c2ce;"></div><div class="r" style="left:1793px;top:206px;width:9px;height:15px;background:#b7c2ce;border-radius:2px;"></div><div class="r" style="left:1795px;top:211px;width:5px;height:2px;background:#2a3440;"></div><div class="r" style="left:1795px;top:215px;width:5px;height:2px;background:#2a3440;"></div><div class="r" style="left:933px;top:251px;width:30px;height:16px;background:#0bb63d;border-radius:3px;"></div><div class="t" style="left:969px;top:252.07px;font-size:15.2px;color:#5f6b77;-webkit-text-stroke-width:0;letter-spacing:0.1px;">Dow-Jones index</div><div class="r" style="left:1099px;top:259px;width:30px;height:1px;background:#c23531;opacity:0.6;"></div><div class="r" style="left:1108px;top:253px;width:13px;height:13px;background:#ffffff;border-radius:50%;box-shadow:0 0 0 0.6px #c23531;"></div><div class="t" style="left:1136px;top:252.07px;font-size:15.2px;color:#5f6b77;-webkit-text-stroke-width:0;letter-spacing:0.3px;">MA5</div><div class="r" style="left:1180px;top:259px;width:30px;height:1px;background:#2f4554;opacity:0.6;"></div><div class="r" style="left:1189px;top:253px;width:13px;height:13px;background:#ffffff;border-radius:50%;box-shadow:0 0 0 0.6px #2f4554;"></div><div class="t" style="left:1217px;top:252.07px;font-size:15.2px;color:#5f6b77;-webkit-text-stroke-width:0;letter-spacing:0.3px;">MA10</div><div class="r" style="left:1270px;top:259px;width:30px;height:1px;background:#61a0a8;opacity:0.6;"></div><div class="r" style="left:1279px;top:253px;width:13px;height:13px;background:#ffffff;border-radius:50%;box-shadow:0 0 0 0.6px #61a0a8;"></div><div class="t" style="left:1307px;top:252.07px;font-size:15.2px;color:#5f6b77;-webkit-text-stroke-width:0;letter-spacing:0.3px;">MA20</div><div class="r" style="left:1360px;top:259px;width:30px;height:1px;background:#d48265;opacity:0.6;"></div><div class="r" style="left:1369px;top:253px;width:13px;height:13px;background:#ffffff;border-radius:50%;box-shadow:0 0 0 0.6px #d48265;"></div><div class="t" style="left:1397px;top:252.07px;font-size:15.2px;color:#5f6b77;-webkit-text-stroke-width:0;letter-spacing:0.3px;">MA30</div><div class="t" style="left:498px;top:332.69px;font-size:16.8px;color:#f2f5f8;-webkit-text-stroke-width:0.5px;">Limit Order</div><div class="t" style="left:621px;top:332.69px;font-size:16.8px;color:#8d97a3;">Market Order</div><div class="r" style="left:479px;top:363px;width:120px;height:2px;background:#eef1f4;"></div><div class="t b" style="left:1303px;top:332.28px;font-size:15.6px;color:#e8edf2;font-weight:bold;">Fees = 0.2%</div><div class="t" style="left:517px;top:393.28px;font-size:15.6px;color:#a3b6ce;">Available 9264 USDT</div><div class="t" style="left:517px;top:443.78px;font-size:15.6px;color:#6b7683;">Price</div><div class="r" style="left:517px;top:472px;width:401px;height:40px;background:transparent;border:1px solid #3b4d63;border-radius:4px;box-sizing:border-box;"></div><div class="t" style="left:532px;top:481.22px;font-size:19.2px;color:#69737e;">7360</div><div class="t" style="left:901px;top:481.22px;font-size:19.2px;color:#6b7580;transform:translateX(-100%);">USDT</div><div class="t" style="left:517px;top:544.28px;font-size:15.6px;color:#6b7683;">Amount</div><div class="r" style="left:517px;top:572px;width:401px;height:40px;background:transparent;border:1px solid #3b4d63;border-radius:4px;box-sizing:border-box;"></div><div class="t" style="left:853px;top:582.22px;font-size:19.2px;color:#6b7580;transform:translateX(-100%);">BTC</div><div class="r" style="left:867px;top:583px;width:1px;height:17px;background:#6b7580;"></div><div class="t" style="left:880px;top:582.22px;font-size:19.2px;color:#e8613f;">All</div><div class="r" style="left:517px;top:651px;width:402px;height:44px;background:#3d9243;border:2px solid #3b6b8c;border-radius:3px;box-sizing:border-box;"></div><div class="t" style="left:718px;top:662.72px;font-size:19.2px;color:#eaf4ea;transform:translateX(-50%);">BUY BTC</div><div class="t" style="left:973px;top:393.28px;font-size:15.6px;color:#a3b6ce;">Available 0.0 BTC</div><div class="t" style="left:973px;top:443.78px;font-size:15.6px;color:#6b7683;">Price</div><div class="r" style="left:973px;top:472px;width:401px;height:40px;background:transparent;border:1px solid #3b4d63;border-radius:4px;box-sizing:border-box;"></div><div class="t" style="left:988px;top:481.22px;font-size:19.2px;color:#69737e;">7351.93</div><div class="t" style="left:1357px;top:481.22px;font-size:19.2px;color:#6b7580;transform:translateX(-100%);">USDT</div><div class="t" style="left:973px;top:544.28px;font-size:15.6px;color:#6b7683;">Amount</div><div class="r" style="left:973px;top:572px;width:401px;height:40px;background:transparent;border:1px solid #3b4d63;border-radius:4px;box-sizing:border-box;"></div><div class="t" style="left:1309px;top:582.22px;font-size:19.2px;color:#6b7580;transform:translateX(-100%);">BTC</div><div class="r" style="left:1323px;top:583px;width:1px;height:17px;background:#6b7580;"></div><div class="t" style="left:1336px;top:582.22px;font-size:19.2px;color:#e8613f;">All</div><div class="r" style="left:973px;top:651px;width:402px;height:44px;background:#e35b4b;border:2px solid #e35b4b;border-radius:3px;box-sizing:border-box;"></div><div class="t" style="left:1174px;top:662.72px;font-size:19.2px;color:#eaf4ea;transform:translateX(-50%);">SELL BTC</div><div class="t" style="left:1697px;top:308.69px;font-size:16.8px;color:#6b7785;transform:translateX(-100%);">Price (USDT)</div><div class="t" style="left:1885px;top:308.69px;font-size:16.8px;color:#6b7785;transform:translateX(-100%);">Amount(BTC)</div><div class="t" style="left:1456px;top:339.29px;font-size:16.8px;color:#cd5f4f;">Sell 7</div><div class="t" style="left:1697px;top:339.29px;font-size:16.8px;color:#b3c2d8;transform:translateX(-100%);">7358.12</div><div class="t" style="left:1885px;top:339.29px;font-size:16.8px;color:#b3c2d8;transform:translateX(-100%);">0.05235</div><div class="t" style="left:1456px;top:365.64px;font-size:16.8px;color:#cd5f4f;">Sell 6</div><div class="t" style="left:1697px;top:365.64px;font-size:16.8px;color:#b3c2d8;transform:translateX(-100%);">7358.1</div><div class="t" style="left:1885px;top:365.64px;font-size:16.8px;color:#b3c2d8;transform:translateX(-100%);">2.00751</div><div class="t" style="left:1456px;top:391.99px;font-size:16.8px;color:#cd5f4f;">Sell 5</div><div class="t" style="left:1697px;top:391.99px;font-size:16.8px;color:#b3c2d8;transform:translateX(-100%);">7358.09</div><div class="t" style="left:1885px;top:391.99px;font-size:16.8px;color:#b3c2d8;transform:translateX(-100%);">0.33883</div><div class="t" style="left:1456px;top:418.34px;font-size:16.8px;color:#cd5f4f;">Sell 4</div><div class="t" style="left:1697px;top:418.34px;font-size:16.8px;color:#b3c2d8;transform:translateX(-100%);">7358.08</div><div class="t" style="left:1885px;top:418.34px;font-size:16.8px;color:#b3c2d8;transform:translateX(-100%);">1.42235</div><div class="t" style="left:1456px;top:444.69px;font-size:16.8px;color:#cd5f4f;">Sell 3</div><div class="t" style="left:1697px;top:444.69px;font-size:16.8px;color:#b3c2d8;transform:translateX(-100%);">7358.07</div><div class="t" style="left:1885px;top:444.69px;font-size:16.8px;color:#b3c2d8;transform:translateX(-100%);">0.00171</div><div class="t" style="left:1456px;top:471.04px;font-size:16.8px;color:#cd5f4f;">Sell 2</div><div class="t" style="left:1697px;top:471.04px;font-size:16.8px;color:#b3c2d8;transform:translateX(-100%);">7357.45</div><div class="t" style="left:1885px;top:471.04px;font-size:16.8px;color:#b3c2d8;transform:translateX(-100%);">0.89294</div><div class="t" style="left:1456px;top:497.39px;font-size:16.8px;color:#cd5f4f;">Sell 1</div><div class="t" style="left:1697px;top:497.39px;font-size:16.8px;color:#b3c2d8;transform:translateX(-100%);">7357.44</div><div class="t" style="left:1885px;top:497.39px;font-size:16.8px;color:#b3c2d8;transform:translateX(-100%);">0.48926</div><div class="t" style="left:1456px;top:537.39px;font-size:16.8px;color:#64b066;">Buy 1</div><div class="t" style="left:1697px;top:537.39px;font-size:16.8px;color:#b3c2d8;transform:translateX(-100%);">7353</div><div class="t" style="left:1885px;top:537.39px;font-size:16.8px;color:#b3c2d8;transform:translateX(-100%);">0.39108</div><div class="t" style="left:1456px;top:563.82px;font-size:16.8px;color:#64b066;">Buy 2</div><div class="t" style="left:1697px;top:563.82px;font-size:16.8px;color:#b3c2d8;transform:translateX(-100%);">7352.99</div><div class="t" style="left:1885px;top:563.82px;font-size:16.8px;color:#b3c2d8;transform:translateX(-100%);">0.4893</div><div class="t" style="left:1456px;top:590.25px;font-size:16.8px;color:#64b066;">Buy 3</div><div class="t" style="left:1697px;top:590.25px;font-size:16.8px;color:#b3c2d8;transform:translateX(-100%);">7352.96</div><div class="t" style="left:1885px;top:590.25px;font-size:16.8px;color:#b3c2d8;transform:translateX(-100%);">0.68291</div><div class="t" style="left:1456px;top:616.68px;font-size:16.8px;color:#64b066;">Buy 4</div><div class="t" style="left:1697px;top:616.68px;font-size:16.8px;color:#b3c2d8;transform:translateX(-100%);">7352.94</div><div class="t" style="left:1885px;top:616.68px;font-size:16.8px;color:#b3c2d8;transform:translateX(-100%);">5.89125</div><div class="t" style="left:1456px;top:643.11px;font-size:16.8px;color:#64b066;">Buy 5</div><div class="t" style="left:1697px;top:643.11px;font-size:16.8px;color:#b3c2d8;transform:translateX(-100%);">7352.05</div><div class="t" style="left:1885px;top:643.11px;font-size:16.8px;color:#b3c2d8;transform:translateX(-100%);">0.09787</div><div class="t" style="left:1456px;top:669.54px;font-size:16.8px;color:#64b066;">Buy 6</div><div class="t" style="left:1697px;top:669.54px;font-size:16.8px;color:#b3c2d8;transform:translateX(-100%);">7351.92</div><div class="t" style="left:1885px;top:669.54px;font-size:16.8px;color:#b3c2d8;transform:translateX(-100%);">0.17169</div><div class="t" style="left:1456px;top:695.97px;font-size:16.8px;color:#64b066;">Buy 7</div><div class="t" style="left:1697px;top:695.97px;font-size:16.8px;color:#b3c2d8;transform:translateX(-100%);">7350.21</div><div class="t" style="left:1885px;top:695.97px;font-size:16.8px;color:#b3c2d8;transform:translateX(-100%);">0.03</div><div class="t" style="left:517px;top:762.22px;font-size:19.2px;color:#b3c2d8;">Open Order</div><div class="t b" style="left:517px;top:815.19px;font-size:16.8px;color:#b3c2d8;font-weight:bold;">Date</div><div class="t b" style="left:783px;top:815.19px;font-size:16.8px;color:#b3c2d8;font-weight:bold;">Pairs</div><div class="t b" style="left:974px;top:815.19px;font-size:16.8px;color:#b3c2d8;font-weight:bold;transform:translateX(-100%);">Type</div><div class="t b" style="left:1128px;top:815.19px;font-size:16.8px;color:#b3c2d8;font-weight:bold;transform:translateX(-100%);">Price(USDT)</div><div class="t b" style="left:1300px;top:815.19px;font-size:16.8px;color:#b3c2d8;font-weight:bold;transform:translateX(-100%);">Amount(BTC)</div><div class="t b" style="left:1451px;top:815.19px;font-size:16.8px;color:#b3c2d8;font-weight:bold;transform:translateX(-100%);">Total(USDT)</div><div class="t b" style="left:1569px;top:815.19px;font-size:16.8px;color:#b3c2d8;font-weight:bold;transform:translateX(-100%);">Executed</div><div class="t b" style="left:1719px;top:815.19px;font-size:16.8px;color:#b3c2d8;font-weight:bold;transform:translateX(-100%);">Unexecuted</div><div class="t b" style="left:1852px;top:815.19px;font-size:16.8px;color:#b3c2d8;font-weight:bold;transform:translateX(-100%);">Action</div><div class="t" style="left:517px;top:862.69px;font-size:16.8px;color:#b3c2d8;">7/19/2018, 2:50:38 PM</div><div class="t" style="left:783px;top:862.69px;font-size:16.8px;color:#b3c2d8;">BTC/USDT</div><div class="t" style="left:974px;top:862.69px;font-size:16.8px;color:#5aab5c;transform:translateX(-100%);-webkit-text-stroke-width:0.15px;">Buy</div><div class="t" style="left:1128px;top:862.69px;font-size:16.8px;color:#b3c2d8;transform:translateX(-100%);">7360.0</div><div class="t" style="left:1300px;top:862.69px;font-size:16.8px;color:#b3c2d8;transform:translateX(-100%);">0.1</div><div class="t" style="left:1451px;top:862.69px;font-size:16.8px;color:#b3c2d8;transform:translateX(-100%);">736.0</div><div class="t" style="left:1569px;top:862.69px;font-size:16.8px;color:#b3c2d8;transform:translateX(-100%);">0.0</div><div class="t" style="left:1719px;top:862.69px;font-size:16.8px;color:#b3c2d8;transform:translateX(-100%);">0.1</div><div class="r" style="left:1769px;top:850px;width:84px;height:40px;background:#141a2a;border:1px solid #38485c;border-radius:4px;box-sizing:border-box;"></div><div class="t" style="left:1811px;top:862.69px;font-size:16.8px;color:#a3b4cc;transform:translateX(-50%);">Cancel</div><div class="r" style="left:517px;top:894px;width:1336px;height:1px;background:#2b3743;"></div><div class="t" style="left:517px;top:963.92px;font-size:19.2px;color:#b3c2d8;">Order History</div><div class="t b" style="left:517px;top:1016.29px;font-size:16.8px;color:#b3c2d8;font-weight:bold;">Date</div><div class="t b" style="left:604px;top:1016.29px;font-size:16.8px;color:#b3c2d8;font-weight:bold;">Pairs</div><div class="t b" style="left:756px;top:1016.29px;font-size:16.8px;color:#b3c2d8;font-weight:bold;">Type</div><div class="t b" style="left:927px;top:1016.29px;font-size:16.8px;color:#b3c2d8;font-weight:bold;">Price(USDT)</div><div class="t b" style="left:1112px;top:1016.29px;font-size:16.8px;color:#b3c2d8;font-weight:bold;">Amount</div><div class="t b" style="left:1344px;top:1016.29px;font-size:16.8px;color:#b3c2d8;font-weight:bold;">Executed(BTC)</div><div class="t b" style="left:1617px;top:1016.29px;font-size:16.8px;color:#b3c2d8;font-weight:bold;">Average Price</div><div class="t b" style="left:1852px;top:1016.29px;font-size:16.8px;color:#b3c2d8;font-weight:bold;transform:translateX(-100%);">Status</div></div>
<div id="vs"><div style="position:absolute;left:3px;top:217px;width:15px;height:438px;background:#c1c2bf"></div>
<div style="position:absolute;left:5px;top:8px;width:0;height:0;border-left:5px solid transparent;border-right:5px solid transparent;border-bottom:5px solid #505050"></div>
<div style="position:absolute;left:6px;top:1046px;width:0;height:0;border-left:4.5px solid transparent;border-right:4.5px solid transparent;border-top:5px solid #505050"></div></div>
<div id="hs"><div style="position:absolute;left:20px;top:3px;width:1849px;height:15px;background:#c1c2bf"></div>
<div style="position:absolute;left:6px;top:6px;width:0;height:0;border-top:5px solid transparent;border-bottom:5px solid transparent;border-right:5px solid #505050"></div>
<div style="position:absolute;left:1886px;top:6px;width:0;height:0;border-top:4.5px solid transparent;border-bottom:4.5px solid transparent;border-left:5px solid #505050"></div></div>
<div id="corner"></div>
</body></html>
